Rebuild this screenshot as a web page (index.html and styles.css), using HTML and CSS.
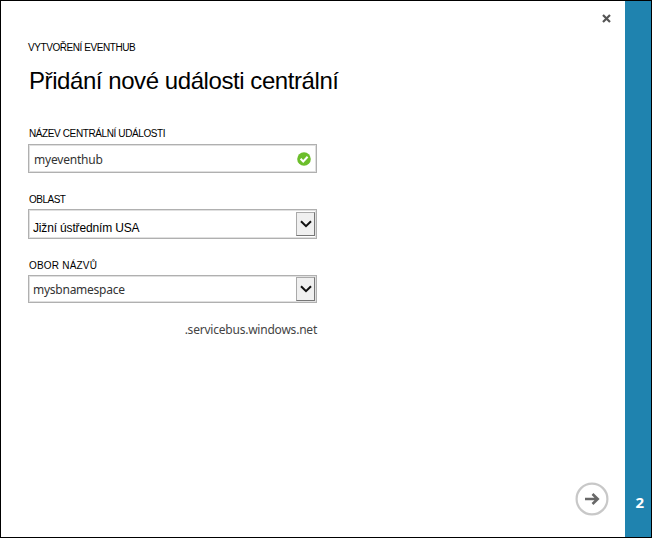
FILE: index.html
```html
<!DOCTYPE html>
<html lang="cs">
<head>
<meta charset="utf-8">
<title>Přidání nové události centrální</title>
<link rel="stylesheet" href="styles.css">
</head>
<body>
<div class="dialog">
  <main class="content">
    <div class="step"><span>VYTVOŘENÍ EVENTHUB</span></div>
    <h1><span>Přidání nové události centrální</span></h1>
    <div class="label name-label"><span>NÁZEV CENTRÁLNÍ UDÁLOSTI</span></div>
    <div class="field name-field">
      <span class="value hub">myeventhub</span>
      <svg class="check" width="14" height="14" viewBox="0 0 14 14"><circle cx="7" cy="7" r="6.8" fill="#6cbe2b"/><path d="M3.6 6.8 6.2 9.5 10.6 4.7" fill="none" stroke="#fff" stroke-width="2"/></svg>
    </div>
    <div class="label region-label"><span>OBLAST</span></div>
    <div class="field region-field">
      <span class="value region">Jižní ústředním USA</span>
      <span class="drop"><svg width="12" height="8" viewBox="0 0 12 8"><path d="M1 1.2 6 6.2 11 1.2" fill="none" stroke="#111" stroke-width="2"/></svg></span>
    </div>
    <div class="label ns-label"><span>OBOR NÁZVŮ</span></div>
    <div class="field ns-field">
      <span class="value namespace">mysbnamespace</span>
      <span class="drop"><svg width="12" height="8" viewBox="0 0 12 8"><path d="M1 1.2 6 6.2 11 1.2" fill="none" stroke="#111" stroke-width="2"/></svg></span>
    </div>
    <div class="suffix"><span>.servicebus.windows.net</span></div>
  </main>
  <div class="controls">
    <svg class="close" width="9" height="9" viewBox="0 0 9 9"><path d="M1 1 8 8M8 1 1 8" stroke="#555" stroke-width="2.2"/></svg>
    <svg class="next" width="34" height="34" viewBox="0 0 34 34"><circle cx="17" cy="17" r="15.4" fill="#fff" stroke="#c8c8c8" stroke-width="2.2"/><path d="M10 17H22M17.5 12 22.7 17 17.5 22" fill="none" stroke="#686868" stroke-width="2.6"/></svg>
  </div>
  <aside class="rail">2</aside>
</div>
</body>
</html>
```
FILE: styles.css
```css
* { box-sizing: border-box; }
body { margin: 0; background: #fff; }
.dialog {
  display: flex;
  width: 652px;
  height: 538px;
  border: 1px solid #000;
  overflow: hidden;
  font-family: "Liberation Sans", Arial, sans-serif;
  color: #000;
  white-space: nowrap;
}
.content { width: 316px; padding: 41px 0 0 27px; }
.step, .label { font-size: 10px; line-height: 12px; }
.step { letter-spacing: -0.43px; }
h1 {
  margin: 13px 0 0 1px;
  font-size: 24px;
  line-height: 28px;
  font-weight: 400;
  letter-spacing: -0.43px;
}
.name-label { margin: 33px 0 0 1px; letter-spacing: -0.39px; }
.region-label { margin: 21px 0 0 1px; letter-spacing: -0.5px; }
.ns-label { margin: 21px 0 0 1px; letter-spacing: 0.2px; }
.field {
  display: flex;
  align-items: center;
  justify-content: space-between;
  width: 289px;
  padding: 0 1px 0 4px;
  border: 1px solid #b0b0b0;
  outline: 1px solid #e0e0e0;
  outline-offset: -2px;
}
.name-field { height: 29px; margin-top: 4px; padding: 0 5px; }
.region-field { height: 30px; margin-top: 3px; }
.ns-field { height: 28px; margin-top: 3px; }
.value { font: 12px/16px "Noto Sans", sans-serif; color: #333; }
.hub { padding-top: 2px; letter-spacing: -0.2px; }
.namespace { padding-top: 2px; letter-spacing: -0.25px; }
.region {
  font: 12px/16px "Liberation Sans", Arial, sans-serif;
  letter-spacing: -0.16px;
  color: #000;
  padding-top: 7px;
}
.drop {
  display: flex;
  align-items: center;
  justify-content: center;
  width: 19px;
  height: 24px;
  background: #f0f0f0;
  border: 1px solid #aaa;
  border-right-color: #777;
  border-bottom-color: #777;
}
.suffix {
  width: 289px;
  margin-top: 19px;
  text-align: right;
  font: 12px/16px "Noto Sans", sans-serif;
  letter-spacing: -0.22px;
  color: #444;
}
.controls {
  flex: 1;
  display: flex;
  flex-direction: column;
  align-items: flex-end;
  justify-content: space-between;
  padding: 13px 16px 21px 0;
}
.close { margin-right: -2px; }
.rail {
  width: 26px;
  padding: 0 7px 24px 0;
  display: flex;
  align-items: flex-end;
  justify-content: flex-end;
  background: #1f83af;
  color: #fff;
  font: 700 15px/22px "Noto Sans", sans-serif;
}
```
